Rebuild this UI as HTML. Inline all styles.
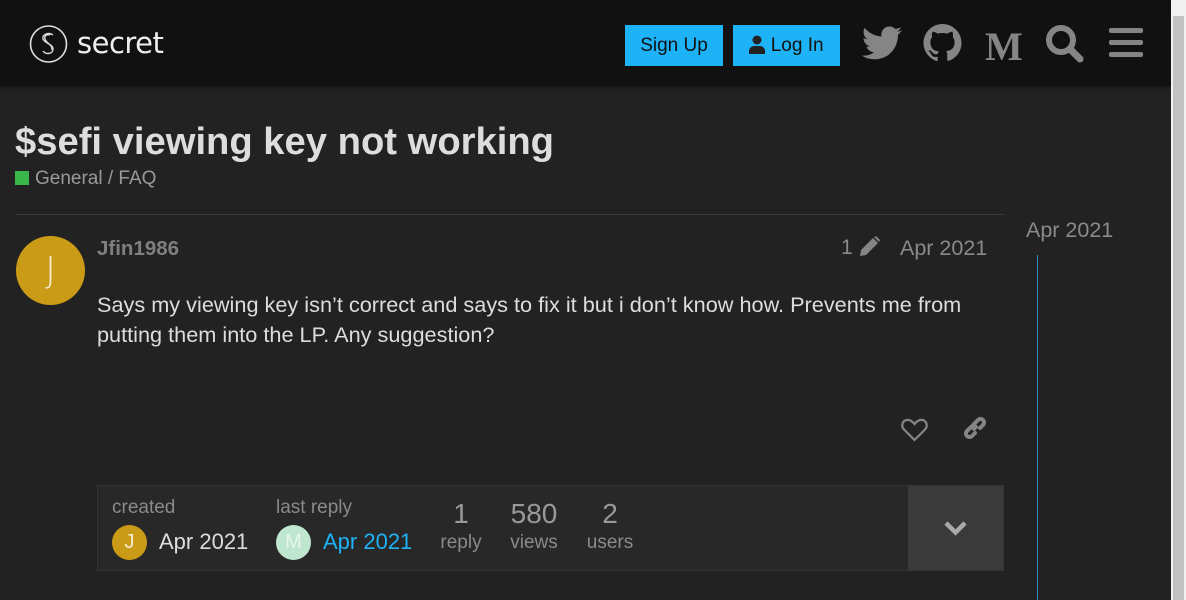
<!DOCTYPE html>
<html><head><meta charset="utf-8"><style>
*{margin:0;padding:0;box-sizing:border-box}
body{width:1186px;height:600px;overflow:hidden;background:#222;font-family:"Liberation Sans",sans-serif;position:relative;color:#ddd}
.hdr{position:absolute;left:0;top:0;width:1171px;height:86px;background:#111;box-shadow:0 2px 4px rgba(0,0,0,.4)}
.sb{position:absolute;left:1171px;top:0;width:15px;height:600px;background:#f1f1f1}
.sb i{position:absolute;left:2px;top:16px;width:11px;height:584px;background:#c1c1c1}
.abs{position:absolute}
.btn{position:absolute;top:25px;height:41px;background:#1eb2f7;color:#111;font-size:19px;line-height:41px;text-align:center}
.gray{color:#8a8a8a}
</style></head><body>
<div class="hdr">
<svg class="abs" style="left:29px;top:24px" width="40" height="40" viewBox="0 0 40 40"><circle cx="19.5" cy="20" r="18" fill="none" stroke="#ddd" stroke-width="1.6"/><path d="M24 11c-4-3-11-1-10 4 1 4 10 5 10 10 0 5-7 6-10 2M21 11c-3-1-6 1-5 4 1 4 8 6 7 11" fill="none" stroke="#ddd" stroke-width="1.4"/></svg>
<div class="abs" style="left:77px;top:26px;font-size:29px;color:#eee;font-family:'DejaVu Sans',sans-serif;letter-spacing:-0.5px">secret</div>
<div class="btn" style="left:625px;width:98px">Sign Up</div>
<div class="btn" style="left:733px;width:107px"><svg width="16" height="19" viewBox="0 0 16 19" style="vertical-align:-3px"><circle cx="8" cy="5" r="4.5" fill="#222"/><path d="M0 19v-3c0-3 3-5 5-5h6c2 0 5 2 5 5v3z" fill="#222"/></svg> Log In</div>
<svg class="abs" style="left:862px;top:26px" width="40" height="34" viewBox="0 0 512 416"><path fill="#858585" d="M459 104c1 4 1 9 1 13 0 139-106 299-299 299-59 0-115-17-161-47 8 1 16 1 25 1 49 0 94-17 130-45-46-1-85-31-98-73 6 1 13 2 20 2 9 0 19-1 27-4-48-10-84-52-84-103v-1c14 8 30 13 47 13C39 140 20 106 20 69c0-20 5-38 14-54 52 64 129 105 216 110-2-8-3-16-3-24 0-58 47-105 105-105 30 0 58 13 77 33 24-5 46-13 67-25-8 24-25 45-46 58 21-2 42-8 60-16-14 21-32 40-51 58z"/></svg>
<svg class="abs" style="left:923px;top:24px" width="39" height="38" viewBox="0 0 16 16"><path fill="#858585" d="M8 0C3.6 0 0 3.6 0 8c0 3.5 2.3 6.5 5.5 7.600.4.1.5-.2.5-.4v-1.4c-2.2.5-2.7-1-2.7-1-.4-.9-.9-1.2-.9-1.2-.7-.5.1-.5.1-.5.8.1 1.2.8 1.2.8.7 1.2 1.900.9 2.300.7.1-.5.3-.9.5-1.100-1.800-.2-3.600-.9-3.600-4 0-.9.3-1.600.8-2.100-.1-.2-.4-1 .1-2.100 0 0 .7-.2 2.200.8.6-.2 1.300-.3 2-.3s1.400.1 2 .3c1.500-1 2.200-.8 2.200-.8.4 1.100.2 1.900.1 2.100.5.6.8 1.300.8 2.100 0 3.100-1.900 3.700-3.600 3.900.3.3.5.8.5 1.500v2.200c0 .2.1.5.6.4C13.700 14.500 16 11.500 16 8c0-4.400-3.600-8-8-8z"/></svg>
<div class="abs" style="left:985px;top:23px;font-family:'Liberation Serif',serif;font-weight:bold;font-size:40px;color:#858585">M</div>
<svg class="abs" style="left:1045px;top:24px" width="40" height="39" viewBox="0 0 40 39"><circle cx="16" cy="16" r="12" fill="none" stroke="#858585" stroke-width="6"/><path d="M25 25l10 10" stroke="#858585" stroke-width="7" stroke-linecap="round"/></svg>
<svg class="abs" style="left:1108px;top:27px" width="36" height="32" viewBox="0 0 36 32"><g fill="#858585"><rect x="1" y="1" width="34" height="5" rx="2"/><rect x="1" y="13" width="34" height="5" rx="2"/><rect x="1" y="25" width="34" height="5" rx="2"/></g></svg>
</div>
<div class="sb"><i></i></div>
<div class="abs" style="left:15px;top:120px;font-size:38.2px;font-weight:bold;color:#ddd">$sefi viewing key not working</div>
<div class="abs" style="left:15px;top:171px;width:14px;height:14px;background:#3ab54a"></div>
<div class="abs gray" style="left:35px;top:168px;font-size:19px;color:#999">General / FAQ</div>
<div class="abs" style="left:16px;top:214px;width:988px;height:1px;background:#3a3a3a"></div>
<div class="abs" style="left:16px;top:236px;width:69px;height:69px;border-radius:50%;background:#c99b16;color:#f4ecd0;font-size:36px;text-align:center;line-height:69px;font-family:'DejaVu Sans',sans-serif;font-weight:300">J</div>
<div class="abs" style="left:97px;top:237px;font-size:20.5px;font-weight:bold;color:#7f7f7f">Jfin1986</div>
<div class="abs gray" style="left:841px;top:236px;font-size:21px">1</div>
<svg class="abs" style="left:858px;top:236px" width="23" height="22" viewBox="0 0 23 22"><path d="M2 20l1-6L15 2l5 5L8 19z" fill="#858585"/><path d="M16 1l2-1 4 4-1 2z" fill="#858585"/></svg>
<div class="abs gray" style="left:900px;top:236px;font-size:21.5px">Apr 2021</div>
<div class="abs" style="left:97px;top:290px;font-size:21.7px;line-height:30px;color:#ddd;width:900px;white-space:nowrap">Says my viewing key isn’t correct and says to fix it but i don’t know how. Prevents me from<br>putting them into the LP. Any suggestion?</div>
<svg class="abs" style="left:901px;top:418px" width="27" height="24" viewBox="0 0 27 24"><path d="M13.5 22L3 11.5C0 8.5 1 3 5.5 2c3-.6 5.5 1 8 4 2.5-3 5-4.6 8-4 4.5 1 5.5 6.5 2.5 9.5z" fill="none" stroke="#858585" stroke-width="2.2"/></svg>
<svg class="abs" style="left:964px;top:417px" width="27" height="27" viewBox="0 0 27 27"><g fill="none" stroke="#858585" stroke-width="4" stroke-linecap="round"><path d="M11 16l-3 3a3.5 3.5 0 01-5-5l4-4a3.5 3.5 0 015 0"/><path d="M16 11l3-3a3.5 3.5 0 00-5-5l-4 4a3.5 3.5 0 000 5"/></g></svg>
<div class="abs gray" style="left:1026px;top:218px;font-size:21.5px">Apr 2021</div>
<div class="abs" style="left:1037px;top:255px;width:1px;height:345px;background:#2b8cc4"></div>
<div class="abs" style="left:97px;top:485px;width:907px;height:86px;background:#282828;border:1px solid #333"></div>
<div class="abs" style="left:908px;top:486px;width:95px;height:84px;background:#3a3a3a"></div>
<svg class="abs" style="left:943px;top:520px" width="25" height="16" viewBox="0 0 25 16"><path d="M3 3l9.5 9.5L22 3" fill="none" stroke="#aaa" stroke-width="4.5"/></svg>
<div class="abs gray" style="left:112px;top:497px;font-size:19px">created</div>
<div class="abs" style="left:112px;top:525px;width:35px;height:35px;border-radius:50%;background:#c99b16;color:#f4ecd0;font-size:20px;text-align:center;line-height:35px">J</div>
<div class="abs" style="left:159px;top:529px;font-size:22px;color:#ddd">Apr 2021</div>
<div class="abs gray" style="left:276px;top:497px;font-size:19px">last reply</div>
<div class="abs" style="left:276px;top:525px;width:35px;height:35px;border-radius:50%;background:#bfe6cf;color:#e8f6ee;font-size:20px;text-align:center;line-height:35px">M</div>
<div class="abs" style="left:323px;top:529px;font-size:22px;color:#1eb2f7">Apr 2021</div>
<div class="abs gray" style="left:430px;top:498px;width:62px;text-align:center;font-size:28px;color:#999">1</div>
<div class="abs gray" style="left:430px;top:532px;width:62px;text-align:center;font-size:19px">reply</div>
<div class="abs gray" style="left:500px;top:498px;width:68px;text-align:center;font-size:28px;color:#999">580</div>
<div class="abs gray" style="left:500px;top:532px;width:68px;text-align:center;font-size:19px">views</div>
<div class="abs gray" style="left:580px;top:498px;width:60px;text-align:center;font-size:28px;color:#999">2</div>
<div class="abs gray" style="left:580px;top:532px;width:60px;text-align:center;font-size:19px">users</div>
</body></html>
